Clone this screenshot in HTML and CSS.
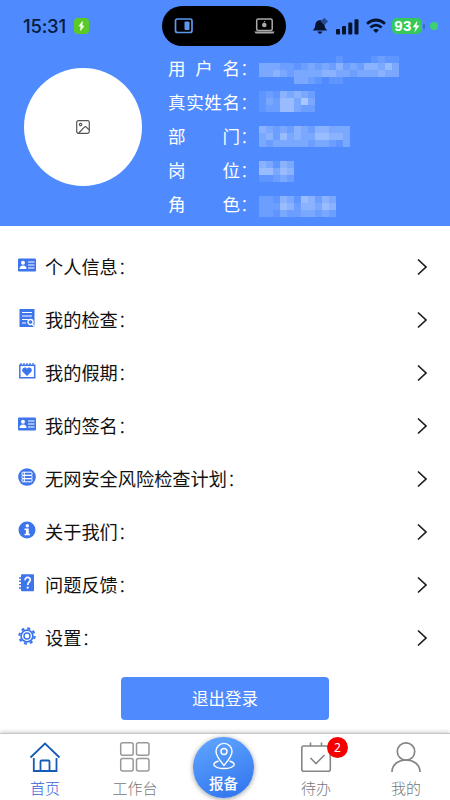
FILE: index.html
```html
<!DOCTYPE html>
<html lang="zh-CN">
<head>
<meta charset="utf-8">
<meta name="viewport" content="width=device-width, initial-scale=1">
<title>我的</title>
<link rel="stylesheet" href="styles.css">
</head>
<body>
<header class="top">
  <div class="status">
    <span class="time">15:31</span>
    <svg class="charge" viewBox="0 0 15 16"><rect width="15" height="16" rx="4" fill="#5acb25"/><path d="M8.500 3.500 5 8h2l-.5 4.500L10 8H8z" fill="#fff" stroke="#fff" stroke-width=".6"/></svg>
    <div class="island">
      <svg width="20" height="18" viewBox="0 0 20 18"><rect x="1.5" y="2" width="16.5" height="13.5" rx="2" fill="none" stroke="#5b98ee" stroke-width="1.7"/><rect x="10.5" y="4.5" width="5" height="8.5" rx="1" fill="#5b98ee"/></svg>
      <svg width="21" height="18" viewBox="0 0 21 18"><rect x="2.7" y="2" width="15.5" height="11.5" rx="1.5" fill="none" stroke="#aaa" stroke-width="1.5"/><path d="M.5 14.500h20l-1 2h-18z" fill="#aaa"/><circle cx="10.300" cy="8" r="2.300" fill="#aaa"/><path d="m10 5.500 1-1.500" stroke="#aaa"/></svg>
    </div>
    <svg class="bell" width="17" height="18" viewBox="0 0 17 18"><path d="M.8 13.500q2.200-1.500 2.500-5.200c.3-3.200 2-5 4.700-5s4.200 2 4.500 5q.3 3.700 2.700 5.200z" fill="#05142c"/><path d="M5.500 14.500h5q-.6 2.300-2.500 2.300t-2.500-2.300" fill="#05142c"/><path d="m12.300.8 3.800 3.700-3.800 3.500-3.800-3.500z" fill="#284b91"/></svg>
    <svg class="signal" width="23" height="17" viewBox="0 0 23 17" fill="#05142c"><rect x="0" y="11" width="4" height="5.500" rx="1"/><rect x="6" y="8" width="4" height="8.500" rx="1"/><rect x="12.300" y="4.500" width="4" height="12" rx="1"/><rect x="18.500" y="1.200" width="4" height="15.300" rx="1"/></svg>
    <svg class="wifi" width="20" height="16" viewBox="0 0 20 16" fill="none" stroke="#05142c" stroke-width="2.700"><path d="M1 5.800q9-7.600 18 0M4.400 9.500q5.600-4.600 11.200 0"/><path d="m10 15-3-3q3-2.200 6 0z" fill="#05142c" stroke="none"/></svg>
    <span class="battery">93<svg width="8" height="13" viewBox="0 0 8 13"><path d="M5.500.5.7 7.200h3L2.300 12.500 7.500 5.400h-3z" fill="#fff"/></svg></span>
    <i class="nub"></i><i class="dot"></i>
  </div>
  <div class="profile">
    <div class="avatar"><svg width="14" height="14" viewBox="0 0 14 14" fill="none" stroke="#555" stroke-width="1.200"><rect x=".7" y=".7" width="12.600" height="12.600" rx="1.700"/><circle cx="4.600" cy="4.600" r="1.200"/><path d="m2.800 13 6-6.300q.5-.4 1 0l3.400 3.200"/></svg></div>
    <dl class="facts">
      <div><dt><span>用</span><span>户</span><span>名</span></dt><dd>：</dd><dd class="mosaic tall" data-cells="00000000000100001211 33322123232423244353 33432333344332333433 00000332101100000000"></dd></div>
      <div><dt><span>真</span><span>实</span><span>姓</span><span>名</span></dt><dd>：</dd><dd class="mosaic" data-cells="12143432 13255363 12255322"></dd></div>
      <div><dt><span>部</span><span>门</span></dt><dd>：</dd><dd class="mosaic low" data-cells="4323243244333 3425343355443 3233333233213"></dd></div>
      <div><dt><span>岗</span><span>位</span></dt><dd>：</dd><dd class="mosaic lower" data-cells="43143 55354 11232"></dd></div>
      <div><dt><span>角</span><span>色</span></dt><dd>：</dd><dd class="mosaic lowest" data-cells="22143154243 22254244354 22132233232"></dd></div>
    </dl>
  </div>
</header>

<main>
  <svg class="defs" width="0" height="0"><symbol id="card" viewBox="0 0 18 18"><rect y="2.500" width="18" height="13" rx="1" fill="#3c75ec"/><circle cx="5" cy="6.700" r="2" fill="#fff"/><path d="M1.500 13q0-3.500 3.500-3.500T8.500 13z" fill="#fff"/><path d="M10 6h6.500M10 9h6.500M10 12h6.500" stroke="#fff" stroke-width="1.200"/></symbol><symbol id="chevron" viewBox="0 0 12 18"><path d="m2 1.500 8 7.500-8 7.500" fill="none" stroke="#1c1c1c" stroke-width="1.700"/></symbol></svg>
  <ul class="menu">
    <li><svg class="ico"><use href="#card"/></svg><span>个人信息<em>：</em></span><svg class="arrow"><use href="#chevron"/></svg></li>
    <li><svg class="ico" viewBox="0 0 18 18"><path d="M1.500 0h15v18h-15z" fill="#3c75ec"/><path d="M4 3.500h10M4 7h10M4 10.500h6M4 14h4" stroke="#fff" stroke-width="1.200"/><circle cx="12.500" cy="13" r="2.500" fill="#3c75ec" stroke="#fff" stroke-width="1.300"/><path d="m14 15 2.500 2.500" stroke="#fff" stroke-width="1.400"/></svg><span>我的检查<em>：</em></span><svg class="arrow"><use href="#chevron"/></svg></li>
    <li><svg class="ico" viewBox="0 0 18 18"><path d="M1.800 3.200h14.900v12.500H1.800z" fill="none" stroke="#3c75ec" stroke-width="1.500"/><path d="M3 1v3M6 1v3M9 1v3M12 1v3M15 1v3" stroke="#3c75ec" stroke-width="1.300"/><path d="M9 14 4.700 9.700C2.600 7 7 3.700 9 6.700c2-3 6.400.3 4.300 3z" fill="#3c75ec"/></svg><span>我的假期<em>：</em></span><svg class="arrow"><use href="#chevron"/></svg></li>
    <li><svg class="ico"><use href="#card"/></svg><span>我的签名<em>：</em></span><svg class="arrow"><use href="#chevron"/></svg></li>
    <li><svg class="ico" viewBox="0 0 18 18"><circle cx="9" cy="9" r="8.800" fill="#3c75ec"/><g fill="none" stroke="#fff"><rect x="4" y="4.200" width="10" height="3" rx=".7"/><rect x="4" y="7.500" width="10" height="3" rx=".7"/><rect x="4" y="10.800" width="10" height="3" rx=".7"/><path d="M6.300 4v10"/></g></svg><span>无网安全风险检查计划<em>：</em></span><svg class="arrow"><use href="#chevron"/></svg></li>
    <li><svg class="ico" viewBox="0 0 18 18"><circle cx="9" cy="9" r="8.500" fill="#3c75ec"/><circle cx="9.300" cy="4.700" r="1.700" fill="#fff"/><path d="M6.500 7.500h4.300v5.200h1.200v1.500H6.500v-1.500h1.400V9H6.500z" fill="#fff"/></svg><span>关于我们<em>：</em></span><svg class="arrow"><use href="#chevron"/></svg></li>
    <li><svg class="ico" viewBox="0 0 18 18"><rect x="3" y=".3" width="13" height="17" rx="1" fill="#3c75ec"/><path d="M1 4h4M1 7.300h4M1 10.600h4M1 14h4" stroke="#3c75ec" stroke-width="1.400"/><path d="M7 6.200c0-4 5.500-3.300 5.300-.2C12.200 8 9.700 8 9.700 11" fill="none" stroke="#fff" stroke-width="1.700"/><circle cx="9.700" cy="13.700" r="1.100" fill="#fff"/></svg><span>问题反馈<em>：</em></span><svg class="arrow"><use href="#chevron"/></svg></li>
    <li><svg class="ico" viewBox="0 0 18 18" fill="none" stroke="#3c75ec"><circle cx="9" cy="9" r="7.600" stroke-width="2.200" stroke-dasharray="2.980 2.990"/><circle cx="9" cy="9" r="5.900" stroke-width="1.700"/><circle cx="9" cy="9" r="3" stroke-width="1.500"/></svg><span>设置<em>：</em></span><svg class="arrow"><use href="#chevron"/></svg></li>
  </ul>
  <button class="logout">退出登录</button>
</main>

<nav class="tabs">
  <a class="tab active"><svg width="32" height="32" viewBox="0 0 32 32" fill="none" stroke="#135db5" stroke-width="1.800"><path d="M1.500 16.500 16 2.500l14.500 14M4.800 17v13h22.700V17M11.500 30v-9.500q0-1 1-1h7q1 0 1 1V30"/></svg><span>首页</span></a>
  <a class="tab"><svg width="32" height="32" viewBox="0 0 32 32" fill="none" stroke="#999" stroke-width="1.500"><rect x="1.700" y="1.700" width="12.500" height="12.500" rx="2"/><rect x="17.500" y="1.700" width="12.500" height="12.500" rx="2"/><rect x="1.700" y="17.500" width="12.500" height="12.500" rx="2"/><rect x="17.500" y="17.500" width="12.500" height="12.500" rx="2"/></svg><span>工作台</span></a>
  <a class="report"><svg width="26" height="28" viewBox="0 0 26 28" fill="none" stroke="#fff" stroke-width="1.400"><path d="M13 23.500C9 18.500 5 14 5 9.400a8 8 0 0 1 16 0c0 4.600-4 9.100-8 14.100z"/><circle cx="13" cy="9.500" r="3"/><path d="M7.500 19C-1 21.500 3 26.500 13 26.500s14-5 5.500-7.500"/></svg><span>报备</span></a>
  <a class="tab"><svg width="32" height="32" viewBox="0 0 32 32" fill="none" stroke="#858585" stroke-width="1.600"><rect x="1.800" y="5" width="28.500" height="25.200" rx="2"/><path d="M10.500 1.500V5M21.500 1.500V5M10.500 17l5.500 5.500 8.500-8.500"/></svg><b class="badge">2</b><span>待办</span></a>
  <a class="tab"><svg width="32" height="32" viewBox="0 0 32 32" fill="none" stroke="#858585" stroke-width="1.700"><circle cx="16" cy="10.500" r="8.700"/><path d="M2 31c0-16 28-16 28 0"/></svg><span>我的</span></a>
</nav>
<script src="mosaic.js"></script>
</body>
</html>
```
FILE: styles.css
```css
* { box-sizing: border-box; }
body { margin: 0; height: 800px; display: flex; flex-direction: column; overflow: hidden; background: #fff; color: #111; font-family: "Noto Sans CJK SC", sans-serif; }
.top { height: 226px; background: #4f8bff; flex: none; }
.status { height: 52px; display: flex; align-items: center; padding-left: 23px; }
.time { width: 45px; font: 500 18.500px/22px Inter, sans-serif; color: #061b40; letter-spacing: -.2px; }
.charge { width: 15px; height: 16px; margin-left: 6px; }
.island { width: 124px; height: 40px; margin-left: 73px; padding: 0 11px 0 12px; border-radius: 20px; background: #000; display: flex; justify-content: space-between; align-items: center; }
.bell { margin-left: 26px; }
.signal { margin-left: 7px; }
.wifi { margin-left: 7px; }
.battery { width: 30px; height: 16px; margin-left: 6px; border-radius: 5px; background: #35c95b; color: #fff; display: flex; align-items: center; justify-content: center; font: 600 15px/16px "Liberation Sans", sans-serif; letter-spacing: .3px; }
.nub { width: 2px; height: 5px; margin-left: 1px; border-radius: 1px; background: #386ac9; }
.dot { width: 8px; height: 8px; margin-left: 5px; border-radius: 50%; background: #3bd16f; }
.profile { display: flex; padding-left: 24px; }
.avatar { width: 118px; height: 118px; margin-top: 16px; border-radius: 50%; background: #fff; display: flex; align-items: center; justify-content: center; }
.facts { margin: -1px 0 0 26px; color: #fff; font-size: 17.500px; line-height: 34px; }
.facts > div { height: 34px; display: flex; }
.facts dt { width: 72px; display: flex; justify-content: space-between; }
.facts dd { margin: 0; width: 19px; font-weight: 300; }
.facts .mosaic { width: auto; margin: 6px 0 0; }
.facts .tall { margin-top: 5px; }
.facts .low { margin-top: 7px; }
.facts .lower { margin-top: 8px; }
.facts .lowest { margin-top: 9px; }
.mosaic svg { display: block; }
.defs { position: absolute; }
.menu { list-style: none; margin: 0; padding: 14px 22px 0 18px; }
.menu li { height: 53px; display: flex; align-items: center; font-size: 18.200px; }
.ico { width: 18px; height: 18px; margin: -4px 9px 0 0; }
.menu span { flex: 1; margin-top: -1px; line-height: 26px; }
.menu em { font-style: normal; font-weight: 300; }
.arrow { width: 12px; height: 18px; }
.logout { display: block; width: 208px; height: 43px; margin: 13px 0 0 121px; padding: 0; border: 0; border-radius: 4px; background: #4f8bff; color: #fff; font: 16.500px/43px "Noto Sans CJK SC", sans-serif; }
.tabs { height: 67px; margin-top: auto; flex: none; display: grid; grid-template-columns: repeat(5, 1fr); border-top: 1px solid #c5c5c5; box-shadow: 0 -1px 4px #ccc; background: #fff; }
.tab { position: relative; display: flex; flex-direction: column; align-items: center; padding-top: 7px; font-size: 15px; font-weight: 300; line-height: 22px; color: #777; }
.tab span { margin-top: 4px; }
.tab:last-child, .tab:nth-child(4) { padding-left: 2px; }
.tab.active { color: #3560d8; }
.report { width: 61px; height: 61px; margin: 3px auto 0 13px; padding-top: 5px; border-radius: 50%; background: linear-gradient(160deg, #61a7ff, #2f72ed); box-shadow: 0 1px 5px #999; color: #fff; display: flex; flex-direction: column; align-items: center; font-size: 14.500px; font-weight: 500; line-height: 20px; }
.report span { margin-top: 3px; }
.badge { position: absolute; left: 57px; top: 3px; width: 21px; height: 21px; border-radius: 50%; background: #f50000; color: #fff; font: 12px/21px "Noto Sans", sans-serif; text-align: center; }
```
FILE: mosaic.js
```js
// Draws masked values as 7px blocks; each digit is the strength of one block.
document.querySelectorAll('.mosaic').forEach(function (el) {
  var rows = el.dataset.cells.split(' ');
  var size = 7, w = rows[0].length * size, h = rows.length * size;
  var out = '<svg width="' + w + '" height="' + h + '" shape-rendering="crispEdges" fill="#fff">';
  rows.forEach(function (row, y) {
    row.split('').forEach(function (d, x) {
      out += '<rect x="' + x * size + '" y="' + y * size + '" width="7" height="7" fill-opacity="' + d * 0.085 + '"/>';
    });
  });
  el.innerHTML = out + '</svg>';
});
```
